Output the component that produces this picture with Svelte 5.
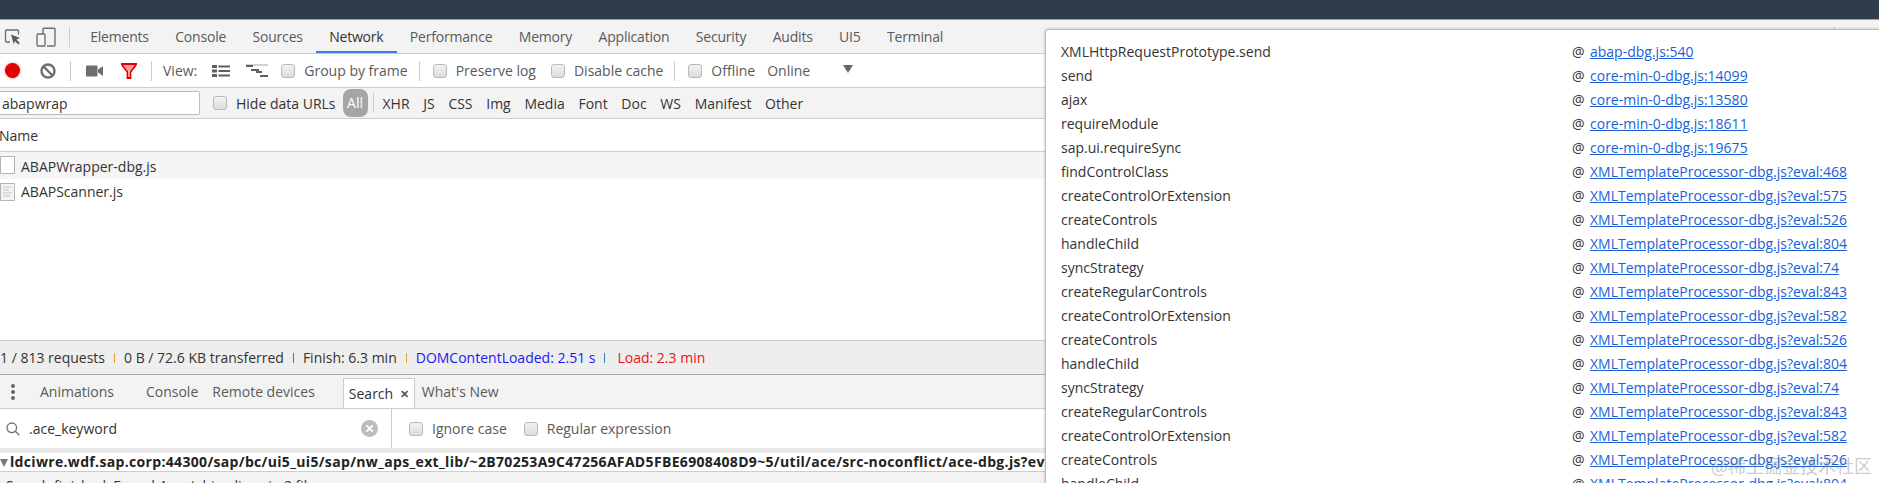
<script lang="ts">
  const tabs = ["Elements", "Console", "Sources", "Network", "Performance", "Memory", "Application", "Security", "Audits", "UI5", "Terminal"];
  const filters = ["XHR", "JS", "CSS", "Img", "Media", "Font", "Doc", "WS", "Manifest", "Other"];
  const XT = "XMLTemplateProcessor-dbg.js?eval:";
  const stack = [
    ["XMLHttpRequestPrototype.send", "abap-dbg.js:540"],
    ["send", "core-min-0-dbg.js:14099"],
    ["ajax", "core-min-0-dbg.js:13580"],
    ["requireModule", "core-min-0-dbg.js:18611"],
    ["sap.ui.requireSync", "core-min-0-dbg.js:19675"],
    ["findControlClass", XT + "468"],
    ["createControlOrExtension", XT + "575"],
    ["createControls", XT + "526"],
    ["handleChild", XT + "804"],
    ["syncStrategy", XT + "74"],
    ["createRegularControls", XT + "843"],
    ["createControlOrExtension", XT + "582"],
    ["createControls", XT + "526"],
    ["handleChild", XT + "804"],
    ["syncStrategy", XT + "74"],
    ["createRegularControls", XT + "843"],
    ["createControlOrExtension", XT + "582"],
    ["createControls", XT + "526"],
    ["handleChild", XT + "804"],
  ];
</script>

<div class="devtools">
  <div class="topbar"></div>

  <div class="tabbar">
    <div class="tool-icons">
      <svg width="18" height="18" viewBox="0 0 18 18" fill="none">
        <path d="M6 14H2.5a1 1 0 0 1-1-1V3a1 1 0 0 1 1-1h11a1 1 0 0 1 1 1v3.5" stroke="#6e6e6e" stroke-width="1.3" />
        <path d="M7 6.5l9 3.6-3.6 1.4 3.4 3.6-1.5 1.4-3.3-3.6-1.2 3.4z" fill="#5a5a5a" />
      </svg>
      <svg width="20" height="20" viewBox="0 0 20 20" fill="none" stroke="#6e6e6e" stroke-width="1.4">
        <path d="M7 7V2.2a1 1 0 0 1 1-1h10a1 1 0 0 1 1 1V18a1 1 0 0 1-1 1h-7" />
        <rect x="1" y="7" width="8" height="12" rx="1" />
      </svg>
    </div>
    <span class="sep tall"></span>
    <div class="tabs">
      {#each tabs as tab}
        <span class="tab" class:active={tab === "Network"}>{tab}</span>
      {/each}
    </div>
    <span class="spacer"></span>
    <span class="sep end"></span>
    <span class="kebab"></span>
  </div>

  <div class="toolbar">
    <span class="record"></span>
    <svg class="block" width="16" height="16" viewBox="0 0 16 16" fill="none" stroke="#6e6e6e" stroke-width="2.4">
      <circle cx="8" cy="8" r="6.5" />
      <path d="M3.5 3.5l9 9" />
    </svg>
    <span class="sep"></span>
    <svg class="camera" width="17" height="12" viewBox="0 0 17 12" fill="#6e6e6e">
      <rect x="0" y="0.5" width="11.5" height="11" rx="1" />
      <path d="M12 4.5l5-3.5v10l-5-3.5z" />
    </svg>
    <svg class="funnel" width="18" height="16" viewBox="0 0 18 16" fill="none" stroke="#e00000" stroke-width="1.8">
      <path d="M3 2h12l-5 6H8z" fill="#ff9a9a" stroke="none" />
      <path d="M1 1h16M2 2l5.5 7v6h3V9L16 2" />
    </svg>
    <span class="sep"></span>
    <span class="label">View:</span>
    <svg class="view-a" width="18" height="12" viewBox="0 0 18 12" fill="#5f5f5f">
      <rect x="0" y="0" width="5" height="3" /><rect x="6.5" y="0.5" width="11.5" height="2" />
      <rect x="0" y="4.5" width="5" height="3" /><rect x="6.5" y="5" width="11.5" height="2" />
      <rect x="0" y="9" width="5" height="3" /><rect x="6.5" y="9.5" width="11.5" height="2" />
    </svg>
    <svg class="view-b" width="22" height="13" viewBox="0 0 22 13">
      <rect x="0" y="0" width="22" height="2" fill="#d0d0d0" />
      <rect x="0" y="1" width="7" height="2" fill="#5f5f5f" />
      <rect x="5" y="5" width="8" height="2" fill="#5f5f5f" />
      <rect x="10" y="7" width="6" height="2" fill="#5f5f5f" />
      <rect x="14" y="11" width="8" height="2" fill="#5f5f5f" />
    </svg>
    <label class="check first"><span class="box"></span>Group by frame</label>
    <span class="sep"></span>
    <label class="check"><span class="box"></span>Preserve log</label>
    <label class="check cache"><span class="box"></span>Disable cache</label>
    <span class="sep"></span>
    <label class="check"><span class="box"></span>Offline</label>
    <span class="label online">Online</span>
    <span class="caret"></span>
  </div>

  <div class="filterbar">
    <div class="filter-input">abapwrap</div>
    <label class="check hide"><span class="box"></span>Hide data URLs</label>
    <span class="all">All</span>
    <span class="sep short"></span>
    <div class="filters">
      {#each filters as f}
        <span>{f}</span>
      {/each}
    </div>
  </div>

  <div class="name-head">Name</div>

  <div class="requests">
    <div class="req hover">
      <svg width="16" height="20" viewBox="0 0 16 20"><path d="M0.5 1.5h14v17h-14z" fill="#fff" stroke="#b5b5b5" /></svg>
      <span>ABAPWrapper-dbg.js</span>
    </div>
    <div class="req">
      <svg width="16" height="20" viewBox="0 0 16 20">
        <path d="M0.5 1.5h14v17h-14z" fill="#f4f4f4" stroke="#b5b5b5" />
        <path d="M3 5h9M3 8h6M3 11h9M3 14h7" stroke="#d4d4d4" stroke-width="1.4" />
      </svg>
      <span>ABAPScanner.js</span>
    </div>
  </div>

  <div class="summary">
    <span>1 / 813 requests</span><i class="orange"></i>
    <span>0 B / 72.6 KB transferred</span><i class="blue"></i>
    <span>Finish: 6.3 min</span><i class="orange"></i>
    <span class="dcl">DOMContentLoaded: 2.51 s</span><i class="blue"></i>
    <span class="load">Load: 2.3 min</span>
  </div>

  <div class="drawer-tabs">
    <span class="dots"></span>
    <span class="dtab anim">Animations</span>
    <span class="dtab cons">Console</span>
    <span class="dtab rem">Remote devices</span>
    <span class="dtab search-tab">Search <b>✕</b></span>
    <span class="dtab news">What's New</span>
  </div>

  <div class="search-row">
    <div class="search-box">
      <svg width="14" height="14" viewBox="0 0 14 14" fill="none" stroke="#757575" stroke-width="1.4">
        <circle cx="5.8" cy="5.8" r="4.8" />
        <path d="M9.3 9.3l4 4" />
      </svg>
      <span class="query">.ace_keyword</span>
      <svg class="clear" width="17" height="17" viewBox="0 0 16 16">
        <circle cx="8" cy="8" r="8" fill="#bdbdbd" />
        <path d="M5 5l6 6M11 5l-6 6" stroke="#fff" stroke-width="1.8" />
      </svg>
    </div>
    <label class="check ignore"><span class="box"></span>Ignore case</label>
    <label class="check regex"><span class="box"></span>Regular expression</label>
  </div>

  <div class="gap"></div>

  <div class="result">
    <span class="tri"></span>ldciwre.wdf.sap.corp:44300/sap/bc/ui5_ui5/sap/nw_aps_ext_lib/~2B70253A9C47256AFAD5FBE6908408D9~5/util/ace/src-noconflict/ace-dbg.js?eval
  </div>

  <div class="search-status">Search finished. Found 4 matching lines in 2 files.</div>

  <div class="popup">
    {#each stack as row}
      <div class="frame">
        <span class="fn">{row[0]}</span>
        <span class="at">@</span>
        <span class="link">{row[1]}</span>
      </div>
    {/each}
  </div>

  <div class="watermark">@稀土掘金技术社区</div>
</div>

<style>
  :global(body) {
    margin: 0;
    background: #fff;
  }

  .devtools {
    position: relative;
    height: 483px;
    overflow: hidden;
    display: flex;
    flex-direction: column;
    font-family: "Open Sans", "Noto Sans", sans-serif;
    font-size: 14px;
    color: #333;
  }

  .topbar {
    height: 19px;
    flex: none;
    background: #2f3c4a;
    border-bottom: 1px solid #9da2a7;
  }

  .tabbar {
    height: 33px;
    flex: none;
    display: flex;
    align-items: center;
    background: #f3f3f3;
    border-bottom: 1px solid #ccc;
  }

  .tool-icons {
    display: flex;
    align-items: center;
    gap: 14px;
    padding-left: 4px;
  }

  .sep {
    width: 1px;
    height: 20px;
    background: #ccc;
    flex: none;
  }

  .sep.tall {
    margin-left: 13px;
  }

  .tabs {
    display: flex;
    height: 100%;
    margin-left: 7px;
  }

  .tab {
    display: flex;
    align-items: center;
    padding: 0 13.2px;
    color: #5a5a5a;
    box-sizing: border-box;
    letter-spacing: -0.2px;
  }

  .tab.active {
    color: #333;
    border-bottom: 2px solid #3b7de8;
    padding-top: 2px;
  }

  .spacer {
    flex: 1;
  }

  .sep.end {
    margin-right: 22px;
  }

  .kebab {
    width: 3px;
    height: 3px;
    border-radius: 50%;
    background: #666;
    margin-right: 19px;
    box-shadow: 0 5px #666, 0 10px #666;
    margin-bottom: 10px;
  }

  .toolbar {
    height: 33px;
    flex: none;
    display: flex;
    align-items: center;
    background: #fff;
    border-bottom: 1px solid #ccc;
    color: #5a5a5a;
  }

  .record {
    width: 15px;
    height: 15px;
    border-radius: 50%;
    background: #e50000;
    box-shadow: 0 0 3px #f08080;
    margin-left: 5px;
  }

  .block {
    margin-left: 20px;
  }

  .block + .sep {
    margin-left: 14px;
  }

  .camera {
    margin-left: 15px;
  }

  .funnel {
    margin-left: 17px;
  }

  .funnel + .sep {
    margin-left: 13px;
  }

  .label {
    margin-left: 11px;
  }

  .view-a {
    margin-left: 15px;
  }

  .view-b {
    margin-left: 16px;
  }

  .check {
    display: flex;
    align-items: center;
    gap: 9px;
    margin-left: 13px;
    color: #5a5a5a;
  }

  .box {
    width: 12px;
    height: 12px;
    border: 1px solid #b9b9b9;
    border-radius: 3px;
    background: linear-gradient(#f2f2f2, #dcdcdc);
    flex: none;
  }

  .check.first {
    margin-left: 13px;
  }

  .check.first + .sep {
    margin-left: 11px;
  }

  .check.cache {
    margin-left: 15px;
  }

  .check.cache + .sep {
    margin-left: 11px;
  }

  .online {
    margin-left: 12px;
  }

  .caret {
    width: 0;
    height: 0;
    border-left: 5px solid transparent;
    border-right: 5px solid transparent;
    border-top: 8px solid #666;
    margin-left: 33px;
    margin-bottom: 4px;
  }

  .filterbar {
    height: 30px;
    flex: none;
    display: flex;
    align-items: center;
    background: #f3f3f3;
    border-bottom: 1px solid #ccc;
  }

  .filter-input {
    width: 200px;
    height: 24px;
    line-height: 23px;
    box-sizing: border-box;
    padding-left: 2px;
    background: #fff;
    border: 1px solid #bbb;
    border-left: none;
    border-radius: 0 2px 2px 0;
    color: #333;
  }

  .check.hide {
    margin-left: 13px;
    color: #333;
  }

  .all {
    width: 25px;
    height: 28px;
    line-height: 28px;
    text-align: center;
    margin-left: 7px;
    border-radius: 8px;
    background: #a5a5a5;
    color: #fff;
  }

  .sep.short {
    margin-left: 5px;
  }

  .filters {
    display: flex;
    gap: 13.7px;
    margin-left: 9px;
    color: #333;
  }

  .name-head {
    height: 32px;
    line-height: 33px;
    flex: none;
    margin-left: -1px;
    background: #fff;
    border-bottom: 1px solid #ccc;
  }

  .requests {
    height: 188px;
    flex: none;
    background: #fff;
  }

  .req {
    height: 26.5px;
    display: flex;
    align-items: center;
    gap: 5px;
    color: #333;
  }

  .req.hover {
    background: #f5f5f5;
  }

  .req.hover span {
    padding-top: 2px;
  }

  .summary {
    height: 33px;
    flex: none;
    display: flex;
    align-items: center;
    background: #eee;
    border-top: 1px solid #ccc;
    border-bottom: 1px solid #aaa;
    color: #333;
  }

  .summary i {
    width: 1px;
    height: 10px;
    margin: 0 9px;
  }

  .orange {
    background: #e8a13c;
  }

  .blue {
    background: #2a7fc0;
  }

  .dcl {
    color: #1a1aee;
  }

  .load {
    color: #ee1111;
    margin-left: 3px;
  }

  .drawer-tabs {
    height: 33px;
    flex: none;
    display: flex;
    align-items: center;
    background: #f3f3f3;
    border-bottom: 1px solid #ccc;
    color: #5a5a5a;
  }

  .dots {
    width: 4px;
    height: 4px;
    border-radius: 50%;
    background: #666;
    margin-left: 11px;
    margin-bottom: 12px;
    box-shadow: 0 6px #666, 0 12px #666;
  }

  .anim {
    margin-left: 25px;
  }

  .cons {
    margin-left: 32px;
  }

  .rem {
    margin-left: 14px;
  }

  .search-tab {
    align-self: stretch;
    display: flex;
    align-items: center;
    margin-left: 28px;
    margin-top: 3px;
    padding: 0 5px;
    background: #fff;
    border: 1px solid #ccc;
    border-bottom: none;
    color: #333;
    white-space: pre;
  }

  .search-tab b {
    font-size: 11px;
    margin-left: 3px;
    color: #555;
  }

  .news {
    margin-left: 7px;
  }

  .search-row {
    height: 39px;
    flex: none;
    display: flex;
    align-items: center;
    background: #fff;
  }

  .search-box {
    width: 392px;
    height: 100%;
    box-sizing: border-box;
    display: flex;
    align-items: center;
    padding-left: 6px;
    border-right: 1px solid #ccc;
  }

  .query {
    margin-left: 9px;
  }

  .clear {
    margin-left: auto;
    margin-right: 13px;
  }

  .check.ignore {
    margin-left: 17px;
  }

  .check.regex {
    margin-left: 17px;
  }

  .gap {
    height: 5px;
    flex: none;
    background: #e8e8e8;
  }

  .result {
    height: 18px;
    line-height: 18px;
    flex: none;
    background: #fff;
    border-bottom: 1px solid #ccc;
    font-weight: 700;
    letter-spacing: 0.33px;
    white-space: nowrap;
    overflow: hidden;
    color: #222;
  }

  .tri {
    display: inline-block;
    width: 0;
    height: 0;
    border-left: 4px solid transparent;
    border-right: 4px solid transparent;
    border-top: 8px solid #777;
    margin-right: 2px;
  }

  .search-status {
    height: 30px;
    flex: none;
    padding-left: 6px;
    padding-top: 4px;
    background: #f3f3f3;
    white-space: nowrap;
  }

  .popup {
    position: absolute;
    left: 1045px;
    right: -6px;
    top: 29px;
    height: 470px;
    padding: 10px 0 0 15px;
    background: #fff;
    border: 1px solid #bbb;
    border-radius: 4px 0 0 0;
    box-shadow: 0 0 3px rgba(0, 0, 0, 0.25);
    color: #333;
  }

  .frame {
    height: 24px;
    line-height: 24px;
    display: flex;
    white-space: nowrap;
  }

  .fn {
    width: 511px;
  }

  .at {
    width: 18px;
  }

  .link {
    color: #1a5fd8;
    text-decoration: underline;
  }

  .watermark {
    position: absolute;
    right: 7px;
    top: 452px;
    font-family: "Noto Sans CJK SC", sans-serif;
    font-size: 18px;
    color: rgba(120, 120, 120, 0.4);
  }
</style>
